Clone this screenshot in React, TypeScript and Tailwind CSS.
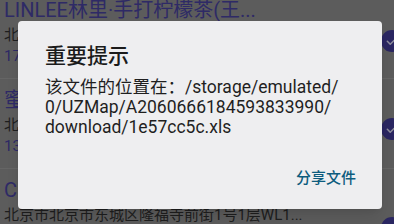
import React from "react";

type Row = {
  title: string;
  address: string;
  phone: string;
  checkTop: string;
};

const rows: Row[] = [
  {
    title: "LINLEE林里·手打柠檬茶(王...",
    address: "北京市北京市东城区王府井大街138号...",
    phone: "17610086688",
    checkTop: "mt-[41px]",
  },
  {
    title: "蜜雪冰城(东四店)",
    address: "北京市北京市东城区东四北大街...",
    phone: "13910012345",
    checkTop: "mt-[39px]",
  },
  {
    title: "CHAGEE霸王茶姬(隆福寺店)",
    address: "北京市北京市东城区隆福寺前街1号1层WL1...",
    phone: "18801234567",
    checkTop: "mt-[48px]",
  },
];

function CheckDot() {
  return (
    <span className="w-[22px] h-[22px] rounded-full bg-[#2a2661] flex items-center justify-center">
      <svg viewBox="0 0 24 24" className="w-[14px] h-[14px]" fill="none" stroke="#8d8c9c" strokeWidth={2.6} strokeLinecap="round" strokeLinejoin="round">
        <path d="M4 12.5l5 5L20 6.5" />
      </svg>
    </span>
  );
}

export default function App() {
  return (
    <div
      className="relative w-[394px] h-[224px] overflow-hidden bg-[#5c5c5c]"
      style={{ fontFamily: "Roboto, 'Noto Sans CJK SC', sans-serif" }}
    >
      {/* list behind the dimmed scrim */}
      <div className="-mt-[12px] flex flex-col">
        {rows.map((r) => (
          <div key={r.phone} className="flex border-t border-[#656565] pl-[4px]">
            <div className="flex-1 min-w-0 pt-[8px] pb-[12px]">
              <p className="text-[20px] leading-[26px] text-[#2e2a66] whitespace-nowrap overflow-hidden">{r.title}</p>
              <p className="mt-[1px] text-[15px] leading-[22px] text-[#1e1e1e] whitespace-nowrap overflow-hidden">{r.address}</p>
              <p className="text-[15px] leading-[20px] text-[#2e2a66]">{r.phone}</p>
            </div>
            <div className={`shrink-0 -mr-[9px] ${r.checkTop}`}>
              <CheckDot />
            </div>
          </div>
        ))}
      </div>

      {/* dialog */}
      <div className="absolute left-[18px] top-[21px] w-[364px] h-[188px] rounded-[4px] bg-[#eeeef0] shadow-lg flex flex-col pl-[27px] pr-[20px] pt-[21px]">
        <h2 className="text-[21px] leading-[28px] font-medium text-[#1b1b1b]">重要提示</h2>
        <p className="mt-[7px] text-[17.5px] leading-[20px] text-[#1f1f1f] whitespace-nowrap">
          该文件的位置在：/storage/emulated/
          <br />
          0/UZMap/A2060666184593833990/
          <br />
          download/1e57cc5c.xls
        </p>
        <div className="mt-auto mb-[13px] pr-[6px] flex justify-end">
          <button className="h-[36px] text-[15px] font-medium text-[#0d5c7e]">分享文件</button>
        </div>
      </div>
    </div>
  );
}
